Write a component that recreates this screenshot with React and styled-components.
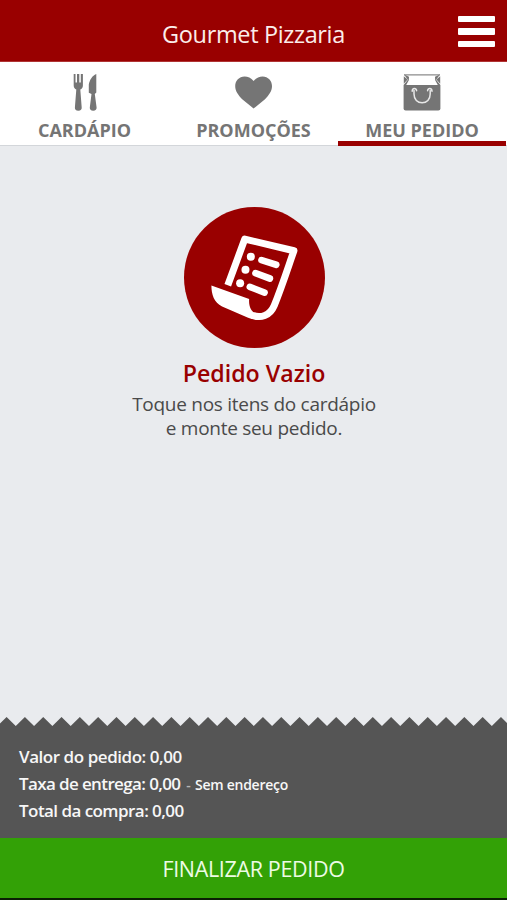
import styled, { createGlobalStyle } from "styled-components";

const TEETH = 29;
const PITCH = 18.31;

const tearPath = Array.from({ length: TEETH }, (_, i) => {
    const peak = 6.6 + (i - 1) * PITCH;
    return `L${peak.toFixed(2)} 0 L${(peak + PITCH / 2).toFixed(2)} 9`;
}).join(" ");

export default function App() {
    return (
        <>
            <GlobalStyle />
            <Screen>
                <Header>
                    <Title>Gourmet Pizzaria</Title>
                    <MenuButton aria-label="Menu">
                        <span />
                        <span />
                        <span />
                    </MenuButton>
                </Header>

                <Tabs>
                    <Tab>
                        <CutleryIcon />
                        <TabLabel>CARDÁPIO</TabLabel>
                    </Tab>
                    <Tab>
                        <HeartIcon />
                        <TabLabel>PROMOÇÕES</TabLabel>
                    </Tab>
                    <Tab $active>
                        <BagIcon />
                        <TabLabel>MEU PEDIDO</TabLabel>
                    </Tab>
                </Tabs>

                <Empty>
                    <ReceiptIcon />
                    <EmptyTitle>Pedido Vazio</EmptyTitle>
                    <EmptyText>
                        Toque nos itens do cardápio
                        <br />e monte seu pedido.
                    </EmptyText>
                </Empty>

                <Tear viewBox="0 0 507 9" preserveAspectRatio="none">
                    <path d={`M-25 9 ${tearPath} Z`} />
                </Tear>
                <Summary>
                    <SummaryLine $spacing="-0.45px">Valor do pedido: 0,00</SummaryLine>
                    <SummaryLine $spacing="-0.62px">
                        Taxa de entrega: 0,00 <Note><Dash>-</Dash> Sem endereço</Note>
                    </SummaryLine>
                    <SummaryLine $spacing="-0.55px">Total da compra: 0,00</SummaryLine>
                </Summary>

                <FinishButton>FINALIZAR PEDIDO</FinishButton>
            </Screen>
        </>
    );
}

function CutleryIcon() {
    return (
        <svg width="24" height="38" viewBox="0 0 24 38" fill="#757575">
            <path d="M.7 0h1.800v8.500h1.500V0h2.300v8.500h1.500V0h2.100v11.500c0 2-1.100 3.400-2.600 4l1.400 18c.2 2-.9 3.200-3.400 3.200s-3.600-1.200-3.400-3.200l1.400-18C1.800 15 .7 13.600.7 11.500Z" />
            <path d="M23.300 0v18.500l-1.500 1.500 1.800 13.500c.2 2-1 3.200-3.400 3.200s-3.600-1.200-3.400-3.200L18.500 20l-2.700-1.200V10.500C16.700 6 19.200 1.500 23.300 0Z" />
        </svg>
    );
}

function HeartIcon() {
    return (
        <svg width="38" height="38" viewBox="0.4 0 38 38" fill="#757575">
            <path d="M19 7.100C21.500 3.800 24.800 2.500 28 2.500c5.500 0 9.400 4.300 9.400 9.600 0 5.200-3.100 9.200-7 13.100L19 34.600 7.600 25.200c-3.900-3.900-7-7.900-7-13.100 0-5.300 3.900-9.600 9.400-9.600 3.200 0 6.500 1.300 9 4.600Z" />
        </svg>
    );
}

function BagIcon() {
    return (
        <svg width="38" height="38" viewBox="0 0 38 38">
            <path fill="#757575" d="M.6 11h36.800v23.500a2 2 0 0 1-2 2H2.600a2 2 0 0 1-2-2Z" />
            <path fill="none" stroke="#8b8b8b" strokeWidth="1.300" d="M1 .9h36" />
            <path fill="#757575" d="M.8 2.200 4.600 5.600.8 9.800ZM37.200 2.200l-3.800 3.400 3.800 4.200Z" />
            <path
                fill="#757575"
                d="M1 .4 6 2.800 5.800 6.200 3.200 11H.6L4.900 5.800ZM37 .4l-5 2.400.2 3.400 2.600 4.800h2.600l-4.300-5.200Z"
            />
            <g fill="none" stroke="#e8e8e8" strokeWidth="1.500" strokeLinecap="round">
                <path d="M11 16.500v3.600c0 5.400 3.500 8.700 8.100 8.700s8.100-3.300 8.100-8.700v-3.600" />
                <path d="M9.200 17.300c0-3.500 4.400-3.500 4.400-.5M29 17.300c0-3.500-4.400-3.500-4.400-.5" />
            </g>
        </svg>
    );
}

function ReceiptIcon() {
    return (
        <svg width="141" height="141" viewBox="26 21 422 422">
            <circle cx="237" cy="232" r="211" fill="#990000" />
            <path
                fill="none"
                stroke="#fff"
                strokeWidth="21"
                strokeLinejoin="round"
                d="M157 255 208 117 355 152C342 188 320 257 296 316 283 347 255 354 231 345"
            />
            <path
                fill="#fff"
                d="M108 256 221 296C219 319 228 338 246 340 258 341 268 339 275 334L285 343C268 361 240 362 216 352L140 319C116 307 108 283 108 256Z"
            />
            <g stroke="#fff" strokeWidth="20" strokeLinecap="round">
                <path d="m258 180 44 14M240 219l43 16M223 260l44 17" />
            </g>
            <g fill="#fff">
                <circle cx="226" cy="170" r="12" />
                <circle cx="210" cy="209" r="12" />
                <circle cx="194" cy="249" r="12" />
            </g>
        </svg>
    );
}

const GlobalStyle = createGlobalStyle`
    * {
        box-sizing: border-box;
    }

    body {
        margin: 0;
        font-family: "Open Sans", "Noto Sans", sans-serif;
    }
`;

const Screen = styled.div`
    width: 507px;
    height: 900px;
    display: flex;
    flex-direction: column;
    background-color: #E9EBEE;
    border-bottom: 2px solid #0B1F04;
    overflow: hidden;
`;

const Header = styled.header`
    height: 62px;
    flex-shrink: 0;
    display: grid;
    grid-template-columns: 1fr auto 1fr;
    background-color: #990000;
    border-bottom: 1px solid #B03434;
`;

const Title = styled.h1`
    grid-column: 2;
    margin: 18px 0 0;
    font-size: 23.5px;
    font-weight: 400;
    line-height: 32px;
    letter-spacing: -0.35px;
    color: #FBEDEA;
`;

const MenuButton = styled.button`
    justify-self: end;
    align-self: start;
    display: flex;
    flex-direction: column;
    gap: 6px;
    margin: 16px 12px 0 0;
    padding: 0;
    border: none;
    background: none;

    span {
        width: 37px;
        height: 6.3px;
        border-radius: 1px;
        background-color: #FFFFFF;
    }
`;

const Tabs = styled.nav`
    height: 84px;
    flex-shrink: 0;
    display: grid;
    grid-template-columns: 169px 169px 168px;
    background-color: #FFFFFF;
    box-shadow: inset 0 -1px 0 #D3D6DA;
`;

const Tab = styled.div`
    height: 84px;
    display: flex;
    flex-direction: column;
    align-items: center;
    padding-top: 12px;
    box-shadow: ${props => props.$active ? "inset 0 -5px 0 #990000" : "none"};

    svg {
        flex-shrink: 0;
    }
`;

const TabLabel = styled.span`
    margin-top: 6px;
    font-size: 18px;
    font-weight: 700;
    line-height: 24px;
    white-space: nowrap;
    color: #757575;
`;

const Empty = styled.main`
    flex: 1;
    display: flex;
    flex-direction: column;
    align-items: center;
    padding: 61px 0 0 1px;
`;

const EmptyTitle = styled.h2`
    margin: 9px 0 0;
    font-size: 23.2px;
    font-weight: 600;
    line-height: 32px;
    color: #990000;
`;

const EmptyText = styled.p`
    margin: 3px 0 0;
    font-size: 19px;
    line-height: 24px;
    letter-spacing: -0.28px;
    text-align: center;
    color: #4A4A4A;
`;

const Tear = styled.svg`
    display: block;
    width: 507px;
    height: 9px;
    flex-shrink: 0;
    fill: #555555;
`;

const Summary = styled.section`
    height: 112px;
    flex-shrink: 0;
    padding: 18px 19px 0;
    background-color: #555555;
`;

const SummaryLine = styled.p`
    margin: 0;
    font-size: 17px;
    font-weight: 600;
    line-height: 26.5px;
    letter-spacing: ${props => props.$spacing};
    white-space: nowrap;
    color: #F7F7F7;
`;

const Note = styled.small`
    margin-left: 2px;
    font-size: 14px;
    letter-spacing: -0.25px;
`;

const Dash = styled.span`
    margin-right: 1px;
    color: #B5B5B5;
`;

const FinishButton = styled.button`
    height: 60px;
    flex-shrink: 0;
    padding: 0;
    border: none;
    background-color: #33A106;
    font-family: inherit;
    font-size: 21.5px;
    letter-spacing: -0.35px;
    color: #EDFBE4;
`;
